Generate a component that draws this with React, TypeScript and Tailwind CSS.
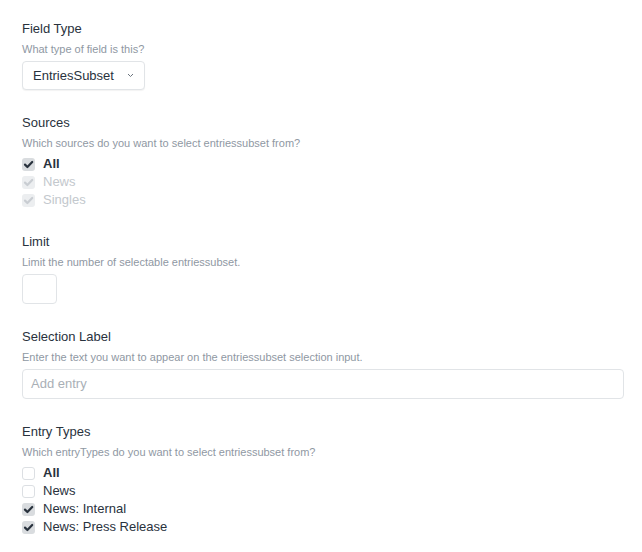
import React from 'react'

type Option = { label: string; checked: boolean; disabled?: boolean; bold?: boolean }

const Checkbox = ({ checked, disabled }: { checked: boolean; disabled?: boolean }) => {
  if (!checked) {
    return <span className="w-[13px] h-[13px] rounded-[3px] border border-[#dcdfe3] bg-white shrink-0" />
  }
  return (
    <span
      className={`w-[13px] h-[13px] rounded-[3px] shrink-0 flex items-center justify-center ${
        disabled ? 'bg-[#eceef0]' : 'bg-[#d9dcdf]'
      }`}
    >
      <svg width="11" height="11" viewBox="0 0 11 11">
        <path
          d="M2 5.6 L4.4 8 L9.2 3"
          fill="none"
          stroke={disabled ? '#c9cdd2' : '#29323d'}
          strokeWidth="2.2"
          strokeLinecap="round"
          strokeLinejoin="round"
        />
      </svg>
    </span>
  )
}

const Field = ({ label, hint, children }: { label: string; hint: string; children: React.ReactNode }) => (
  <div>
    <div className="text-[13px] leading-[18px] text-[#29323d]">{label}</div>
    <div className="mt-[2px] text-[11px] leading-[18px] text-[#8f98a3]">{hint}</div>
    <div className="mt-[3px]">{children}</div>
  </div>
)

const CheckList = ({ options }: { options: Option[] }) => (
  <div className="flex flex-col">
    {options.map(o => (
      <div key={o.label} className="flex items-center h-[18px] gap-[8px]">
        <Checkbox checked={o.checked} disabled={o.disabled} />
        <span
          className={`text-[13px] leading-[18px] ${o.bold ? 'font-bold' : ''} ${
            o.disabled ? 'text-[#c3c8cd]' : 'text-[#29323d]'
          }`}
        >
          {o.label}
        </span>
      </div>
    ))}
  </div>
)

export default function App() {
  return (
    <div
      className="min-h-[552px] bg-white pl-[22px] pr-[18px] pt-[20px] flex flex-col gap-[24px]"
      style={{ fontFamily: '"Liberation Sans", Arial, sans-serif' }}
    >
      <Field label="Field Type" hint="What type of field is this?">
        <div className="w-[123px] h-[29px] rounded-[4px] border border-[#e1e4e7] bg-white shadow-[0_1px_1px_rgba(0,0,0,0.05)] flex items-center justify-between pl-[10px] pr-[10px]">
          <span className="text-[13px] text-[#29323d]">EntriesSubset</span>
          <svg width="7" height="5" viewBox="0 0 7 5">
            <path d="M1 1 L3.5 3.5 L6 1" fill="none" stroke="#6b747e" strokeWidth="1" />
          </svg>
        </div>
      </Field>

      <Field label="Sources" hint="Which sources do you want to select entriessubset from?">
        <CheckList
          options={[
            { label: 'All', checked: true, bold: true },
            { label: 'News', checked: true, disabled: true },
            { label: 'Singles', checked: true, disabled: true },
          ]}
        />
      </Field>

      <Field label="Limit" hint="Limit the number of selectable entriessubset.">
        <div className="w-[35px] h-[30px] rounded-[4px] border border-[#e1e4e7] bg-white" />
      </Field>

      <Field label="Selection Label" hint="Enter the text you want to appear on the entriessubset selection input.">
        <div className="h-[30px] rounded-[4px] border border-[#e1e4e7] bg-white flex items-center pl-[8px]">
          <span className="text-[13px] text-[#a9afb6]">Add entry</span>
        </div>
      </Field>

      <Field label="Entry Types" hint="Which entryTypes do you want to select entriessubset from?">
        <CheckList
          options={[
            { label: 'All', checked: false, bold: true },
            { label: 'News', checked: false },
            { label: 'News: Internal', checked: true },
            { label: 'News: Press Release', checked: true },
          ]}
        />
      </Field>
    </div>
  )
}
